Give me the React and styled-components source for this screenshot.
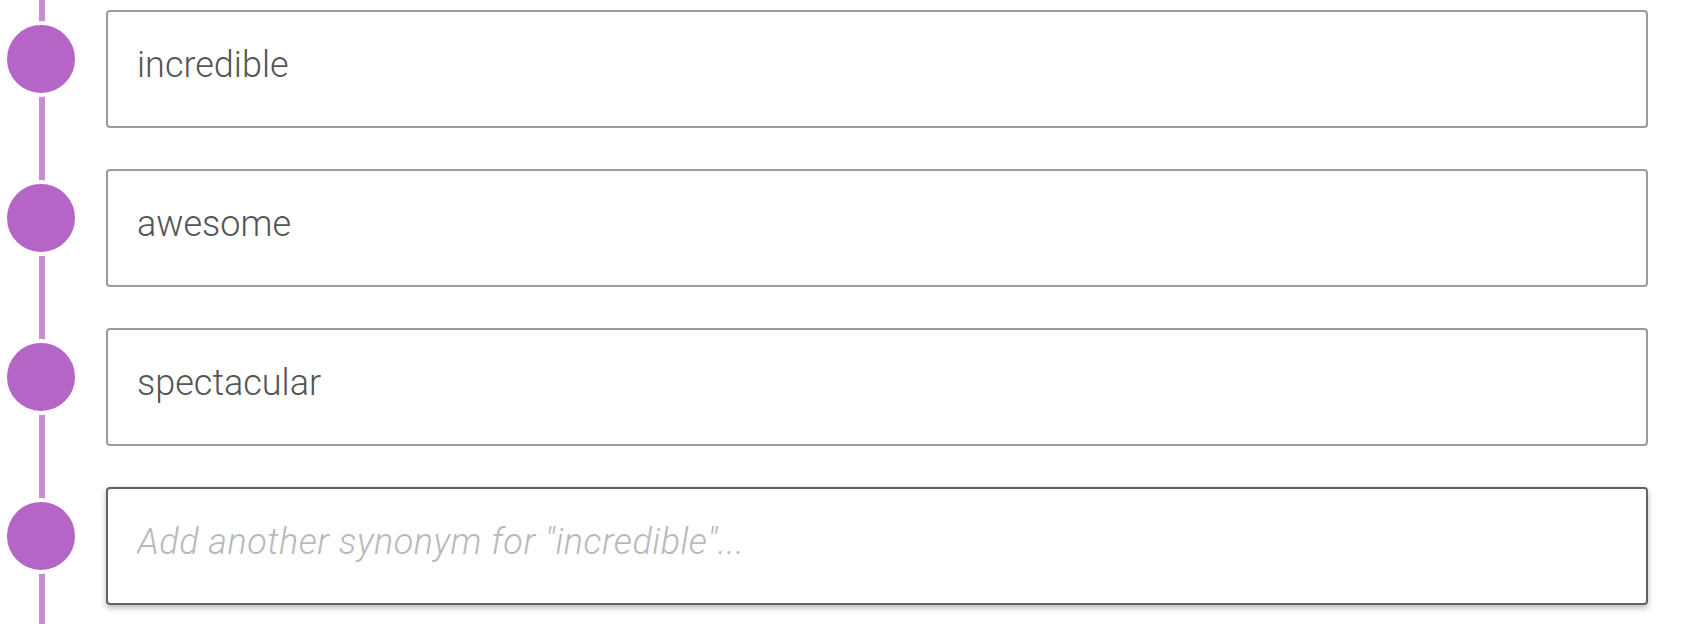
import React from 'react';
import styled, { createGlobalStyle } from 'styled-components';

const GlobalStyle = createGlobalStyle`
  html, body {
    margin: 0;
    padding: 0;
    background: #fff;
  }
  body {
    font-family: Roboto, "Noto Sans", sans-serif;
  }
`;

const Timeline = styled.div`
  display: flex;
  flex-direction: column;
  gap: 41px;
  padding: 10px 34px 40px 0;
  min-height: 624px;
  box-sizing: border-box;
  background: linear-gradient(#c98dd6, #c98dd6) no-repeat 39px 0 / 6px 100%;
`;

const Row = styled.div`
  display: flex;
  align-items: flex-start;
`;

const Marker = styled.div`
  width: 106px;
  flex-shrink: 0;
  display: flex;
  padding-left: 3px;
  padding-top: 11px;
  box-sizing: border-box;
`;

const Dot = styled.span`
  width: 68px;
  height: 68px;
  border-radius: 50%;
  background: #b565c6;
  border: 4px solid #fff;
`;

const Field = styled.input`
  flex: 1;
  height: 118px;
  box-sizing: border-box;
  border: 2px solid ${(p) => (p.$active ? '#626262' : '#9a9a9a')};
  border-radius: 4px;
  padding: 0 29px 9px;
  font-family: Roboto, "Noto Sans", sans-serif;
  font-weight: 300;
  font-size: 36px;
  color: #555;
  background: #fff;
  outline: none;
  box-shadow: ${(p) => (p.$active ? '0 3px 6px rgba(0, 0, 0, 0.28)' : 'none')};

  &::placeholder {
    color: #b9b9b9;
    font-style: italic;
    letter-spacing: 0.5px;
  }
`;

const words = ['incredible', 'awesome', 'spectacular'];

const App = () => {
  return (
    <>
      <GlobalStyle />
      <Timeline>
        {words.map((w) => (
          <Row key={w}>
            <Marker>
              <Dot />
            </Marker>
            <Field defaultValue={w} />
          </Row>
        ))}
        <Row>
          <Marker>
            <Dot />
          </Marker>
          <Field $active placeholder={'Add another synonym for "incredible"...'} />
        </Row>
      </Timeline>
    </>
  );
};

export default App;
